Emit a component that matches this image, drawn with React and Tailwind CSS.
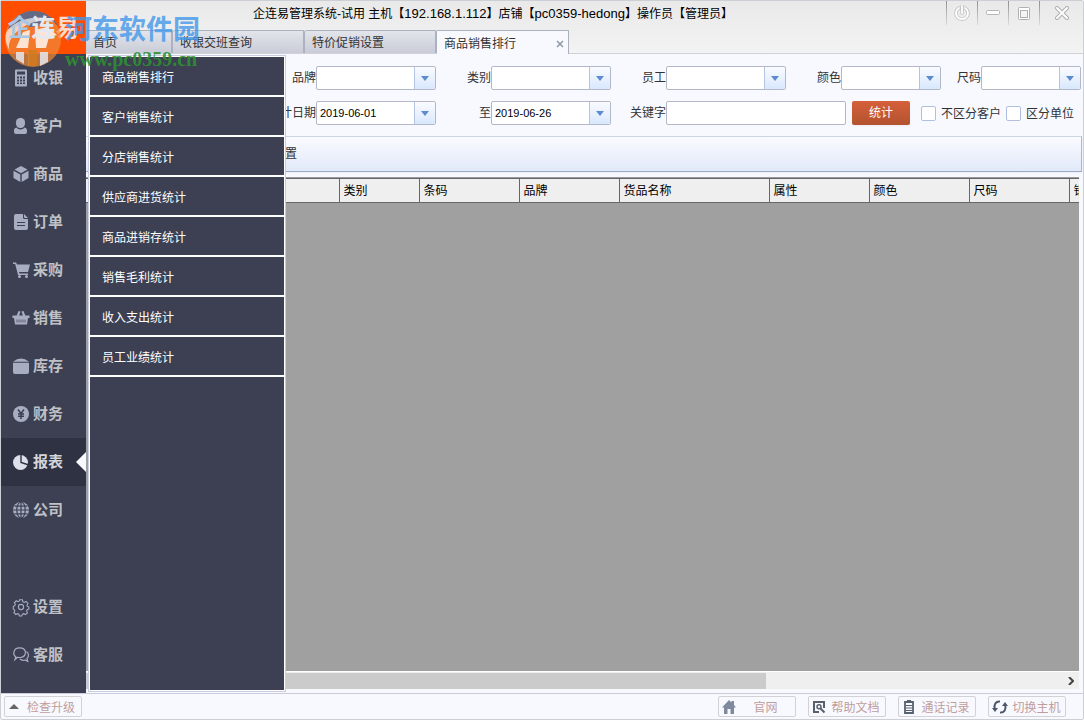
import React, { useState } from "react";

const sideItems = [
  { name: "收银", icon: "calc" },
  { name: "客户", icon: "user" },
  { name: "商品", icon: "box" },
  { name: "订单", icon: "doc" },
  { name: "采购", icon: "cart" },
  { name: "销售", icon: "basket" },
  { name: "库存", icon: "store" },
  { name: "财务", icon: "yen" },
  { name: "报表", icon: "pie" },
  { name: "公司", icon: "globe" },
];

const bottomItems = [
  { name: "设置", icon: "gear" },
  { name: "客服", icon: "chat" },
];

const reportMenu = [
  "商品销售排行",
  "客户销售统计",
  "分店销售统计",
  "供应商进货统计",
  "商品进销存统计",
  "销售毛利统计",
  "收入支出统计",
  "员工业绩统计",
];

const icons = {
  calc: (
    <path fillRule="evenodd" d="M3 -.5h10a1 1 0 0 1 1 1v15a1 1 0 0 1-1 1H3a1 1 0 0 1-1-1V.5a1 1 0 0 1 1-1zm1 2v3h8v-3zm0 5v2h2v-2zm3 0v2h2v-2zm3 0v2h2v-2zm-6 3v2h2v-2zm3 0v2h2v-2zm3 0v2h2v-2zm-6 3v1.500h2v-1.500zm3 0v1.500h2v-1.500zm3 0v1.500h2v-1.500z" />
  ),
  user: (
    <>
      <rect x="3" y="0" width="9" height="10" rx="4.200" />
      <path d="M3.500 9.500C5 12 10 12 11.500 9.500 13.500 10 14 11 14 13v1q0 2-2 2H3q-2 0-2-2v-1c0-2 .5-3 2.500-3.500z" />
    </>
  ),
  box: (
    <>
      <path d="M8 0l6.500 3.500L8 7.200 1.500 3.500z" />
      <path d="M0.500 4.800L7.300 8.600V16L.5 12z" />
      <path d="M15.500 4.800L8.700 8.600V16l6.800-4z" />
    </>
  ),
  doc: (
    <path fillRule="evenodd" d="M3 0h7v3.500q0 1.500 1.500 1.500H15v9q0 2-2 2H3q-2 0-2-2V2q0-2 2-2zm8 0l4 4h-3q-1 0-1-1zM4 8v1h8V8zm0 3v1h8v-1z" />
  ),
  cart: (
    <>
      <path d="M0 .5h3l1 2h13L15 10H6l.5 1.500H15V13H5L2.200 2H0z" />
      <circle cx="6.500" cy="14.500" r="1.500" />
      <circle cx="13.500" cy="14.500" r="1.500" />
    </>
  ),
  basket: (
    <>
      <path d="M3.500 6l2-5 2 .5L6 6zM12.500 6l-2-5-2 .5L10 6z" />
      <path d="M-.5 5.500h17V8H15l-1 6.500H2L1 8H-.5z" />
      <path d="M4 9.500v3M6 9.500v3M8 9.500v3M10 9.500v3M12 9.500v3" stroke="#3c4052" strokeWidth="0.700" />
    </>
  ),
  store: (
    <>
      <path d="M0 3.800Q8-2.800 16 3.800z" />
      <path d="M0 4.800h16V14q0 2-2 2H2q-2 0-2-2z" />
    </>
  ),
  yen: (
    <>
      <circle cx="8" cy="8" r="8" />
      <path d="M5 3.500l3 4 3-4M8 7.500V13M5 8h6M5 10.300h6" fill="none" stroke="#3c4052" strokeWidth="1.500" />
    </>
  ),
  pie: (
    <>
      <circle cx="7.500" cy="8.500" r="7.500" />
      <path d="M8 0v8.500l8 2.500" fill="none" stroke="#2e3242" strokeWidth="1.400" />
    </>
  ),
  globe: (
    <>
      <circle cx="8" cy="8" r="8" />
      <g fill="none" stroke="#3c4052" strokeWidth="1.200">
        <path d="M8 0v16M0 8h16M1.500 4.200h13M1.500 11.800h13" />
        <ellipse cx="8" cy="8" rx="4.200" ry="8" />
      </g>
    </>
  ),
  gear: (
    <g fill="none" stroke="currentColor" strokeWidth="1.100">
      <path d="M6.600.8h2.800l.5 2 1.300.6 1.900-1 1.800 2-.9 1.800.4 1.200 1.500.6v2l-1.700.6-.6 1.300.8 1.900-1.900 1.800-1.800-.9-1.300.5-.6 1.800H6.400l-.6-1.800-1.300-.5-1.700.8L.9 13.700l.9-1.800-.6-1.300-.9-.5V7.300l1.500-.6.5-1.300-.9-1.700 1.900-1.900 1.700.9 1.200-.5z" />
      <circle cx="8" cy="8" r="2.600" />
    </g>
  ),
  chat: (
    <g fill="none" stroke="currentColor" strokeWidth="1.200">
      <path d="M2 12.500l.8-2.500C-.5 7.500.2 1 6.500.9c7.500 0 8 8.600 1 9.600-1 .2-2 0-3-.3z" />
      <path d="M13.500 4.500c2.500 1.800 2.500 5 .5 7l.7 2.800-2.700-1.300c-2 .6-4 0-5-1" />
    </g>
  ),
};

const SideButton = ({ item, active, onClick }) => (
  <button
    onClick={onClick}
    className={`relative flex h-12 w-full items-center gap-1 pl-3 text-[15px] font-bold ${
      active ? "bg-[#2e3242] text-[#d3d5da]" : "text-[#bfc1c6]"
    }`}
  >
    <svg viewBox="0 0 16 16" className={`h-4 w-4 overflow-visible ${active ? "text-[#dde0ea]" : "text-[#a9adc2]"}`} fill="currentColor">
      {icons[item.icon]}
    </svg>
    <span>{item.name}</span>
    {active && (
      <svg viewBox="0 0 10 20" className="absolute right-0 h-5 w-[10px]" fill="#f8f9ff">
        <path d="M10 0v20L0 10z" />
      </svg>
    )}
  </button>
);

const DropArrow = () => (
  <span className="pointer-events-none absolute inset-y-px right-px flex w-[21px] items-center justify-center rounded-r-xs border-l border-[#b4c4e2] bg-linear-to-b from-[#fafbff] to-[#d9e8fd]">
    <svg viewBox="0 0 8 5" className="h-[5px] w-2" fill="#5c8bd0">
      <path d="M0 0h8L4 5z" />
    </svg>
  </span>
);

const SelectField = ({ id, label, value, width = "w-[120px]" }) => (
  <div className="flex items-center justify-end">
    <label htmlFor={id} className="whitespace-nowrap">{label}</label>
    <div className={`relative ${width}`}>
      <select
        id={id}
        defaultValue={value}
        className="block h-6 w-full appearance-none rounded-xs border border-[#b2b8c8] bg-white pl-[3px] text-[11px] text-black"
      >
        <option value={value}>{value}</option>
      </select>
      <DropArrow />
    </div>
  </div>
);

const Divider = () => <span className="w-px bg-linear-to-b from-[#8f8f8f] to-[#dcdcdc]" />;

const WindowButtons = () => (
  <div className="flex h-6">
    <Divider />
    <button aria-label="电源" className="flex w-[30px] items-center justify-center">
      <svg viewBox="0 0 16 16" className="h-4 w-4" fill="none">
        <path d="M5 3a6 6 0 1 0 6 0M8 1v7" stroke="#c4c4c4" strokeWidth="3.500" strokeLinecap="round" />
        <path d="M5 3a6 6 0 1 0 6 0M8 1v7" stroke="#fff" strokeWidth="1.800" strokeLinecap="round" />
      </svg>
    </button>
    <Divider />
    <button aria-label="最小化" className="flex w-[30px] items-center justify-center">
      <svg viewBox="0 0 14 6" className="h-[6px] w-[14px]">
        <rect x="0.500" y="0.500" width="13" height="4" rx="1" fill="#fff" stroke="#b5b5b5" />
      </svg>
    </button>
    <Divider />
    <button aria-label="最大化" className="flex w-[30px] items-center justify-center">
      <svg viewBox="0 0 12 13" className="h-[13px] w-3" fill="#fff" stroke="#b0b0b0">
        <rect x="0.500" y="0.500" width="11" height="12" rx="1" />
        <rect x="2.500" y="3.500" width="7" height="7" fill="#f4f4f4" />
      </svg>
    </button>
    <Divider />
    <button aria-label="关闭" className="flex w-[43px] items-center justify-center">
      <svg viewBox="0 0 14 14" className="h-[14px] w-[14px]" fill="none" strokeLinecap="round">
        <path d="M2 2l10 10M12 2L2 12" stroke="#b0b0b0" strokeWidth="4" />
        <path d="M2 2l10 10M12 2L2 12" stroke="#fff" strokeWidth="2" />
      </svg>
    </button>
  </div>
);

const Tabs = () => (
  <div className="flex h-6 items-end border-b border-[#d0d2d8] text-xs text-[#333]">
    {[
      { name: "首页", width: "w-[87px]" },
      { name: "收银交班查询", width: "w-[132px]" },
      { name: "特价促销设置", width: "w-[132px]" },
    ].map((tab) => (
      <button
        key={tab.name}
        className={`h-[23px] rounded-t-xs border-t border-r-2 border-[#acb1bf] bg-linear-to-b from-[#e3e5eb] to-[#c9ccd7] pt-0.5 pl-[7px] text-left ${tab.width}`}
      >
        {tab.name}
      </button>
    ))}
    <button className="-mb-px flex h-6 w-[132px] items-center justify-between border-t border-r border-[#acb1bf] bg-[#f8f9ff] pt-0.5 pr-1 pl-[7px]">
      商品销售排行
      <svg viewBox="0 0 8 8" className="h-2 w-2" stroke="#8d97a8" strokeWidth="1.500">
        <path d="M1 1l6 6M7 1L1 7" />
      </svg>
    </button>
  </div>
);

const columns = [
  { name: "", width: "w-[253px]" },
  { name: "类别", width: "w-20" },
  { name: "条码", width: "w-[100px]" },
  { name: "品牌", width: "w-[100px]" },
  { name: "货品名称", width: "w-[150px]" },
  { name: "属性", width: "w-[100px]" },
  { name: "颜色", width: "w-[100px]" },
  { name: "尺码", width: "w-[100px]" },
  { name: "销售", width: "w-[100px]" },
];

const footerIcons = {
  官网: (
    <svg viewBox="0 0 14 14" className="h-[14px] w-[14px]" fill="#7f8a9e">
      <path d="M7 0l2.500 2.500V1H12v4l2 2.500h-2V14H8.500V9h-3v5H2V7.500H0z" />
    </svg>
  ),
  帮助文档: (
    <svg viewBox="0 0 14 14" className="h-[14px] w-[14px]" fill="none" stroke="#58606e" strokeWidth="2">
      <path d="M12 8V2H2v10h5" />
      <circle cx="7" cy="6.800" r="2" strokeWidth="1.500" />
      <path d="M8.500 8.500l4 4" />
    </svg>
  ),
  通话记录: (
    <svg viewBox="0 0 14 14" className="h-[14px] w-[14px]" fill="none" stroke="#58606e">
      <path d="M3 2h8v11H3z" strokeWidth="1.800" />
      <path d="M5 1.200h4" strokeWidth="2.400" />
      <path d="M4 5.500h6M4 8h6M4 10.500h6" strokeWidth="1.200" />
    </svg>
  ),
  切换主机: (
    <svg viewBox="0 0 16 14" className="h-[14px] w-4" fill="none" stroke="#4f586b" strokeWidth="2">
      <path d="M8 1.500C4 1 1.500 4.500 2.800 9M8 12.500c4 .5 6.500-3 5.200-7.500" />
      <path d="M0 8l3 4 3-4zM10 6l3-4 3 4z" fill="#4f586b" stroke="none" />
    </svg>
  ),
};

const FooterButton = ({ name }) => (
  <button className="flex h-[21px] w-[78px] items-center rounded-xs border border-[#d2d2d6] pl-[3px]">
    {footerIcons[name]}
    <span className="flex-1 pt-0.5 text-center whitespace-nowrap">{name}</span>
  </button>
);

// download-site stamp over the top left corner
const Watermark = () => (
  <div className="pointer-events-none absolute top-2 left-1 z-20 flex">
    <svg viewBox="0 0 60 60" className="h-[60px] w-[60px]">
      <circle cx="28" cy="30" r="28" fill="#f08a3c" opacity="0.700" />
      <path d="M3 20C10 4 22 2 28 2c12 0 20 6 25 15-5-5-11-7-16-6l-3 6-9 1-6-4-8 4z" fill="#54688f" opacity="0.900" />
      <path d="M2 22C12 8 40 4 50 14 34 8 14 16 6 30c-2 4-3 8-1 12C1 36-1 28 2 22z" fill="#fff" opacity="0.650" />
      <path d="M11 39l7-16 7-2-2 18zM30 21l12-3 10 8-8 2-3 11H31z" fill="#fff" opacity="0.800" />
      <path d="M11 43h8v12l-8-5zM24 43h0v14h-1V43zM35 43h8v10l-8 4z" fill="#e4e0e2" opacity="0.900" />
      <path d="M23 41h9v16h-9z" fill="#d27a20" opacity="0.850" />
    </svg>
    <div className="pt-1 whitespace-nowrap">
      <p className="h-[34px] text-[27px] leading-[34px] font-bold text-[#3f97ea]/80">河东软件园</p>
      <p className="h-6 font-['Liberation_Serif',serif] text-xl leading-6 font-bold text-[#2f8f33]/90">www.pc0359.cn</p>
    </div>
  </div>
);

const App = () => {
  const [selected, setSelected] = useState("报表");

  return (
    <div className="relative flex h-screen flex-col overflow-hidden rounded-xs border border-[#cccfd6] bg-[#f8f9ff] font-['Liberation_Sans','Noto_Sans_CJK_SC',sans-serif] text-xs text-[#333]">
      <div className="flex min-h-0 flex-1">
        <aside className="flex w-[85px] shrink-0 flex-col bg-[#3c4052]">
          <h1 className="flex h-[53px] items-center justify-center bg-[#ff4e00] text-2xl font-bold">
            <span className="relative z-30 text-[#a9c6e4]">企</span>
            <span className="relative z-30 text-[#e3e8f1]">连</span>
            <span className="text-[#ffd9cc]">易</span>
          </h1>
          <nav>
            {sideItems.map((item) => (
              <SideButton
                key={item.name}
                item={item}
                active={selected === item.name}
                onClick={() => setSelected(item.name)}
              />
            ))}
          </nav>
          <nav className="mt-auto mb-[14px]">
            {bottomItems.map((item) => (
              <SideButton key={item.name} item={item} />
            ))}
          </nav>
        </aside>

        <div className="flex min-w-0 flex-1 flex-col">
          <header className="bg-linear-to-b from-[#e9e9e9] to-[#f3f3f3]">
            <div className="flex h-[29px] justify-between">
              <p className="pt-[3px] pl-[167px] text-xs leading-5 whitespace-nowrap text-black">
                企连易管理系统-试用 主机【<span className="text-[13px]">192.168.1.112</span>】店铺【
                <span className="text-[13px]">pc0359-hedong</span>】操作员【管理员】
              </p>
              <WindowButtons />
            </div>
            <Tabs />
          </header>

          {/* 查询条件 */}
          <form className="flex flex-col gap-[11px] pt-3 pr-[2px] pb-[11px]">
            <div className="grid grid-cols-[350fr_175fr_175fr_155fr_140fr]">
              <SelectField id="brand" label="品牌" value="" />
              <SelectField id="category" label="类别" value="" />
              <SelectField id="staff" label="员工" value="" />
              <SelectField id="color" label="颜色" value="" width="w-[100px]" />
              <SelectField id="size" label="尺码" value="" width="w-[100px]" />
            </div>
            <div className="grid grid-cols-[350fr_175fr_235fr_235fr]">
              <SelectField id="from" label="统计日期" value="2019-06-01" />
              <SelectField id="to" label="至" value="2019-06-26" />
              <div className="flex items-center justify-end">
                <label htmlFor="keyword">关键字</label>
                <input id="keyword" type="text" className="h-6 w-[180px] rounded-xs border border-[#b2b8c8] bg-white px-1" />
              </div>
              <div className="flex items-center gap-[5px] pl-[6px] whitespace-nowrap">
                <button type="button" className="mr-[6px] h-6 w-[58px] rounded-xs bg-linear-to-b from-[#d5603a] to-[#b35330] text-white shadow-xs">
                  统计
                </button>
                <input id="noCustomer" type="checkbox" className="h-[15px] w-[15px] appearance-none rounded-xs border border-[#b0bfdf] bg-white" />
                <label htmlFor="noCustomer" className="pt-0.5">不区分客户</label>
                <input id="unit" type="checkbox" className="h-[15px] w-[15px] appearance-none rounded-xs border border-[#b0bfdf] bg-white" />
                <label htmlFor="unit" className="pt-0.5">区分单位</label>
              </div>
            </div>
          </form>

          <div className="mr-px flex h-9 items-center border-y border-r border-t-[#ccd5e4] border-r-[#a9b6cc] border-b-[#9cabc5] bg-linear-to-b from-[#fafbff] to-[#e1e9f9] pl-[175px] shadow-xs">
            <button>列配置</button>
          </div>

          {/* 数据表格 */}
          <div className="mt-[5px] mr-1 mb-1 flex min-h-0 flex-1 flex-col overflow-hidden border-t border-[#999] bg-[#a0a0a0]">
            <table className="w-[1083px] table-fixed border-collapse">
              <thead>
                <tr className="h-6 bg-[#efefef] text-left text-black">
                  {columns.map((col) => (
                    <th
                      key={col.name}
                      className={`border-t border-r border-b border-[#666] pl-1 font-normal ${col.width}`}
                    >
                      {col.name}
                    </th>
                  ))}
                </tr>
              </thead>
            </table>
            <div className="mt-auto flex h-[18px] items-center justify-between border-t border-white bg-[#efefef]">
              <div className="h-4 w-[680px] bg-[#cbcbcb]" />
              <button aria-label="向右滚动" className="mr-[5px]">
                <svg viewBox="0 0 6 8" className="h-2 w-[6px]" fill="none" stroke="#444" strokeWidth="2">
                  <path d="M1 0l4 4-4 4" />
                </svg>
              </button>
            </div>
          </div>
        </div>
      </div>

      {/* 报表菜单 */}
      <div className="absolute top-[54px] bottom-[27px] left-[87px] z-10 w-[198px] border border-[#c8cde0] bg-[#3c4052] text-white">
        <ul className="h-full border border-white">
          {reportMenu.map((name) => (
            <li key={name} className="border-b-2 border-white">
              <button className="h-[38px] w-full pt-[3px] pl-3 text-left">{name}</button>
            </li>
          ))}
        </ul>
      </div>

      <footer className="flex h-[26px] shrink-0 items-center justify-between border-t border-[#c9cdda] pr-[17px] pl-[3px] text-[#bf9d9d]">
        <button className="flex h-[21px] w-[78px] items-center gap-2 rounded-xs border border-[#d2d2d6] pl-1 whitespace-nowrap">
          <svg viewBox="0 0 10 5" className="h-[5px] w-[10px]" fill="#666">
            <path d="M0 5l5-5 5 5z" />
          </svg>
          <span className="pt-0.5">检查升级</span>
        </button>
        <div className="flex gap-3">
          {Object.keys(footerIcons).map((name) => (
            <FooterButton key={name} name={name} />
          ))}
        </div>
      </footer>

      <Watermark />
    </div>
  );
};

export default App;
